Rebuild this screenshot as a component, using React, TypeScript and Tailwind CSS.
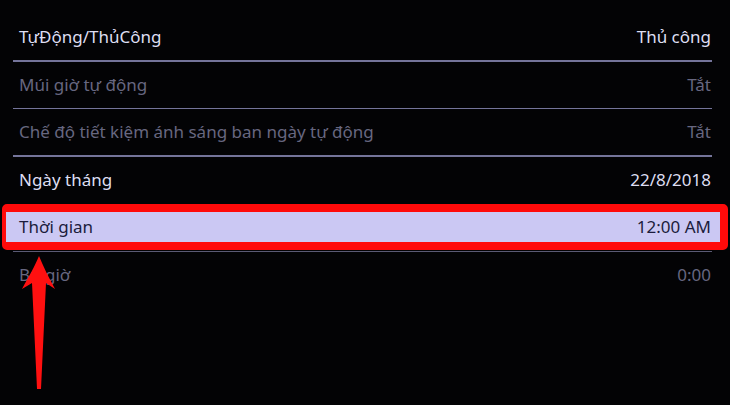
import React from "react";

type Row = { label: string; value: string; dim?: boolean; active?: boolean };

const rows: Row[] = [
  { label: "TựĐộng/ThủCông", value: "Thủ công" },
  { label: "Múi giờ tự động", value: "Tắt", dim: true },
  { label: "Chế độ tiết kiệm ánh sáng ban ngày tự động", value: "Tắt", dim: true },
  { label: "Ngày tháng", value: "22/8/2018" },
  { label: "Thời gian", value: "12:00 AM", active: true },
  { label: "Bù giờ", value: "0:00", dim: true },
];

// ---------- Row ----------
const SettingRow = ({ row, line }: { row: Row; line: boolean }) => (
  <div className="relative">
    {row.active && (
      <div className="absolute left-[-11px] right-[-16px] top-0 h-[46px] rounded-[5px] border-solid border-[#ff0a0a] border-t-[8px] border-b-[8px] border-l-[4px] border-r-[8px] bg-[#cbc8f3]" />
    )}
    <div
      className={
        "relative flex h-[46px] items-center justify-between pl-[6px] pr-px text-[17px] " +
        (row.active ? "text-[#1c1c3c]" : row.dim ? "text-[#676780]" : "text-[#dedef2]")
      }
    >
      <span>{row.label}</span>
      <span>{row.value}</span>
    </div>
    <div className={line ? (row.active ? "mt-[0.5px] h-[1.5px] bg-[#5a5a74]" : "h-[1.5px] bg-[#74749a]") : "h-[1.5px]"} />
  </div>
);

export default function App() {
  return (
    <div
      className="relative h-[405px] w-[730px] overflow-hidden bg-[#030305]"
      style={{ fontFamily: '"Noto Sans", "Open Sans", sans-serif' }}
    >
      <div className="flex flex-col pl-[13px] pr-[18px] pt-[14px]">
        {rows.map((r, i) => (
          <SettingRow key={r.label} row={r} line={i !== 3 && i !== rows.length - 1} />
        ))}
      </div>

      {/* red annotation arrow */}
      <svg className="absolute left-0 top-0" width="80" height="405" viewBox="0 0 80 405">
        <path
          d="M39 256 C43 266 49 278 55 289 L46 283 L41 389 L37 389 L32 283 L22 289 C28 278 35 266 39 256 Z"
          fill="#ff1010"
        />
      </svg>
    </div>
  );
}
